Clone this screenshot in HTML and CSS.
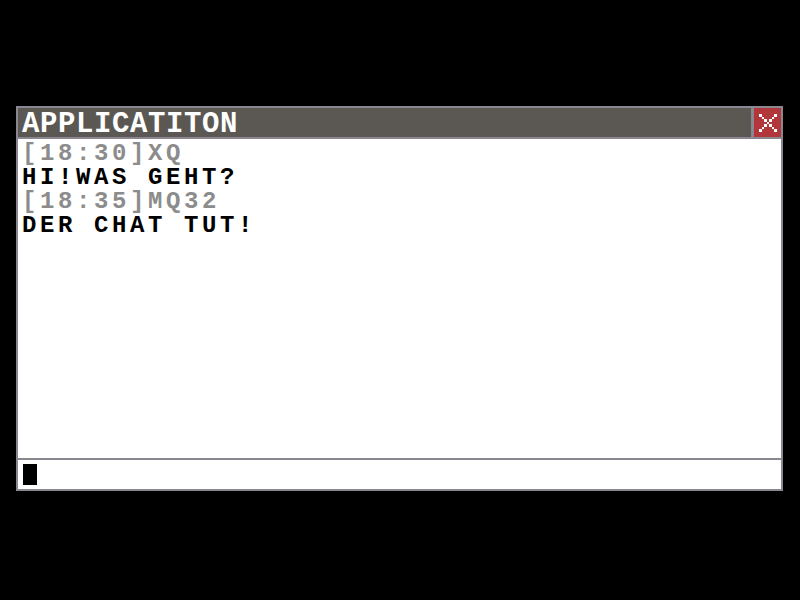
FILE: index.html
```html
<!DOCTYPE html>
<html>
<head>
<meta charset="utf-8">
<link rel="stylesheet" href="styles.css">
</head>
<body>
<div class="screen">
  <div class="window">
    <div class="titlebar">
      <div class="title">APPLICATITON</div>
      <div class="close">
        <svg width="18" height="18" viewBox="0 0 7 7" shape-rendering="crispEdges">
          <g fill="#ffffff">
            <rect x="0" y="0" width="1" height="1"/><rect x="1" y="1" width="1" height="1"/>
            <rect x="2" y="2" width="1" height="1"/><rect x="3" y="3" width="1" height="1"/>
            <rect x="4" y="4" width="1" height="1"/><rect x="5" y="5" width="1" height="1"/>
            <rect x="6" y="6" width="1" height="1"/>
            <rect x="6" y="0" width="1" height="1"/><rect x="5" y="1" width="1" height="1"/>
            <rect x="4" y="2" width="1" height="1"/><rect x="2" y="4" width="1" height="1"/>
            <rect x="1" y="5" width="1" height="1"/><rect x="0" y="6" width="1" height="1"/>
          </g>
        </svg>
      </div>
    </div>
    <div class="messages">
      <div class="line meta">[18:30]XQ</div>
      <div class="line">HI!WAS GEHT?</div>
      <div class="line meta">[18:35]MQ32</div>
      <div class="line">DER CHAT TUT!</div>
    </div>
    <div class="input"><span class="cursor"></span></div>
  </div>
</div>
</body>
</html>
```

FILE: styles.css
```css
html, body {
  margin: 0;
  padding: 0;
  background: #000000;
}
.screen {
  width: 800px;
  height: 600px;
  background: #000000;
  padding-top: 106px;
  padding-left: 16px;
  box-sizing: border-box;
}
.window {
  width: 767px;
  height: 385px;
  box-sizing: border-box;
  border: 2px solid #8b8790;
  background: #8b8790;
  display: flex;
  flex-direction: column;
  font-family: "Liberation Mono", "DejaVu Sans Mono", monospace;
  font-weight: bold;
}
.titlebar {
  height: 29px;
  display: flex;
  gap: 3px;
  flex: none;
}
.title {
  flex: 1;
  background: #5b5853;
  color: #ffffff;
  font-size: 29px;
  letter-spacing: 0.6px;
  line-height: 25px;
  padding: 4px 0 0 4px;
  white-space: nowrap;
}
.close {
  width: 27px;
  background: #b2373a;
  display: flex;
  align-items: center;
  justify-content: center;
}
.close svg {
  display: block;
}
.messages {
  margin-top: 2px;
  flex: 1;
  background: #ffffff;
  padding: 3px 4px 0;
}
.line {
  font-size: 24px;
  letter-spacing: 3.6px;
  line-height: 24px;
  color: #000000;
  white-space: nowrap;
}
.line.meta {
  color: #8c8c8c;
}
.input {
  margin-top: 2px;
  height: 29px;
  flex: none;
  background: #ffffff;
  padding: 4px 0 0 5px;
  box-sizing: border-box;
}
.cursor {
  display: block;
  width: 14px;
  height: 21px;
  background: #000000;
}
```
